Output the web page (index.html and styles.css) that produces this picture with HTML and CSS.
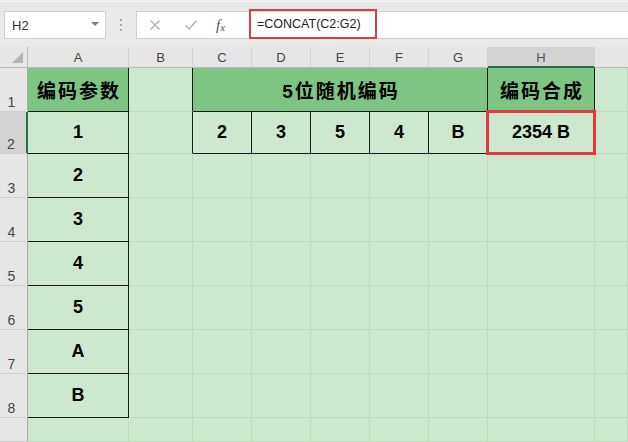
FILE: index.html
```html
<!DOCTYPE html>
<html lang="zh-CN">
<head>
<meta charset="utf-8">
<title>CONCAT</title>
<link rel="stylesheet" href="styles.css">
</head>
<body>
<div class="toolbar">
  <div class="namebox"><span class="ref">H2</span><span class="caret"></span></div>
  <div class="dots"><i></i><i></i><i></i></div>
  <div class="fbar">
    <div class="icons">
      <svg class="ic" width="12" height="12" viewBox="0 0 12 12"><path d="M1.5 1.5 L10.5 10.5 M10.5 1.5 L1.5 10.5" stroke="#b3b3b3" stroke-width="1.4" fill="none"/></svg>
      <svg class="ic" width="14" height="12" viewBox="0 0 14 12"><path d="M1.5 6.5 L5 10 L12.5 1.5" stroke="#b3b3b3" stroke-width="1.5" fill="none"/></svg>
      <span class="fx">f<sub>x</sub></span>
    </div>
    <div class="formula">=CONCAT(C2:G2)</div>
  </div>
</div>
<div class="sheet">
  <div class="corner"><svg width="12" height="12" viewBox="0 0 12 12"><path d="M0 11 L11 0 L11 11 Z" fill="#b5b5b5"/></svg></div>
  <div class="ch">A</div><div class="ch">B</div><div class="ch">C</div><div class="ch">D</div><div class="ch">E</div><div class="ch">F</div><div class="ch">G</div><div class="ch sel">H</div><div class="ch last"></div>

  <div class="rh">1</div>
  <div class="c hd kr kb cjk">编码参数</div>
  <div class="c kr"></div>
  <div class="c hd kr kb cjk span5">5位随机编码</div>
  <div class="c hd kr kb cjk">编码合成</div>
  <div class="c"></div>

  <div class="rh sel">2</div>
  <div class="c kr kb">1</div>
  <div class="c kr"></div>
  <div class="c kr kb">2</div>
  <div class="c kr kb">3</div>
  <div class="c kr kb">5</div>
  <div class="c kr kb">4</div>
  <div class="c kr kb">B</div>
  <div class="c kr kb active">2354<span class="gapb">B</span></div>
  <div class="c"></div>

  <div class="rh">3</div><div class="c kr kb">2</div><div class="c"></div><div class="c"></div><div class="c"></div><div class="c"></div><div class="c"></div><div class="c"></div><div class="c"></div><div class="c"></div>
  <div class="rh">4</div><div class="c kr kb">3</div><div class="c"></div><div class="c"></div><div class="c"></div><div class="c"></div><div class="c"></div><div class="c"></div><div class="c"></div><div class="c"></div>
  <div class="rh">5</div><div class="c kr kb">4</div><div class="c"></div><div class="c"></div><div class="c"></div><div class="c"></div><div class="c"></div><div class="c"></div><div class="c"></div><div class="c"></div>
  <div class="rh">6</div><div class="c kr kb">5</div><div class="c"></div><div class="c"></div><div class="c"></div><div class="c"></div><div class="c"></div><div class="c"></div><div class="c"></div><div class="c"></div>
  <div class="rh">7</div><div class="c kr kb">A</div><div class="c"></div><div class="c"></div><div class="c"></div><div class="c"></div><div class="c"></div><div class="c"></div><div class="c"></div><div class="c"></div>
  <div class="rh">8</div><div class="c kr kb">B</div><div class="c"></div><div class="c"></div><div class="c"></div><div class="c"></div><div class="c"></div><div class="c"></div><div class="c"></div><div class="c"></div>
  <div class="rh"></div><div class="c"></div><div class="c"></div><div class="c"></div><div class="c"></div><div class="c"></div><div class="c"></div><div class="c"></div><div class="c"></div><div class="c"></div>
</div>
</body>
</html>
```
FILE: styles.css
```css
* { box-sizing: border-box; }
html, body { margin: 0; padding: 0; }
body {
  width: 628px;
  height: 442px;
  overflow: hidden;
  background: #e8e8e8;
  font-family: "Liberation Sans", "Noto Sans CJK SC", sans-serif;
}

.toolbar {
  height: 47px;
  display: flex;
  align-items: flex-start;
  padding-top: 11px;
  background: #e9e9e9;
  border-top: 2px solid #f2f2f2;
}
.namebox {
  margin-left: 4px;
  margin-top: -2px;
  width: 102px;
  height: 28px;
  background: #fff;
  border: 1px solid #cfcfcf;
  display: flex;
  align-items: center;
  justify-content: space-between;
  padding: 0 6px 0 7px;
  font-size: 13px;
  color: #333;
}
.caret {
  width: 0; height: 0;
  border-left: 4px solid transparent;
  border-right: 4px solid transparent;
  border-top: 4px solid #7a7a7a;
  margin-top: -2px;
}
.dots {
  width: 30px;
  height: 28px;
  margin-top: -2px;
  display: flex;
  flex-direction: column;
  align-items: center;
  justify-content: center;
  gap: 3px;
}
.dots i {
  display: block;
  width: 2px; height: 2px;
  background: #a6a6a6;
}
.fbar {
  flex: 1;
  height: 28px;
  margin-top: -2px;
  background: #fff;
  border: 1px solid #d0d0d0;
  border-right: none;
  display: flex;
  align-items: center;
}
.icons {
  width: 111px;
  height: 100%;
  display: flex;
  align-items: center;
  padding-left: 12px;
  gap: 0;
}
.icons .ic:first-child { margin-right: 23px; }
.icons .ic:nth-child(2) { margin-right: 18px; }
.fx {
  font-family: "Liberation Serif", serif;
  font-style: italic;
  font-size: 15px;
  color: #555;
  line-height: 1;
}
.fx sub { font-size: 11px; vertical-align: -1px; }
.formula {
  width: 128px;
  height: 30px;
  margin-top: -2px;
  margin-left: 1px;
  border: 2px solid #e23b3f;
  padding-left: 6px;
  display: flex;
  align-items: center;
  font-size: 12.5px;
  color: #222;
}

.sheet {
  display: grid;
  grid-template-columns: 28px 101px 64px 59px 59px 59px 59px 59px 107px 1fr;
  grid-template-rows: 21px 44px 42px 44px 44px 44px 44px 44px 44px 1fr;
  height: 395px;
  background: #cde8cf;
}
.corner {
  background: #e6e6e6;
  border-right: 1px solid #b9b9b9;
  border-bottom: 1px solid #b9b9b9;
  display: flex;
  align-items: flex-end;
  justify-content: flex-end;
  padding: 0 3px 3px 0;
}
.ch {
  background: #e6e6e6;
  border-right: 1px solid #d2d2d2;
  border-bottom: 1px solid #b9b9b9;
  display: flex;
  align-items: center;
  justify-content: center;
  font-size: 13px;
  color: #454545;
  padding-top: 1px;
}
.ch.sel {
  background: #d3d3d3;
  border-bottom: 2px solid #217346;
  color: #555;
}
.ch.last { border-right: none; }
.rh {
  background: #e6e6e6;
  border-right: 1px solid #a9a9a9;
  border-bottom: 1px solid #cfcfcf;
  display: flex;
  align-items: flex-end;
  justify-content: center;
  font-size: 14px;
  color: #454545;
  padding-bottom: 1px;
  padding-right: 4px;
}
.rh.sel {
  background: #d3d3d3;
  border-right: 2px solid #217346;
}
.c {
  background: #cde8cf;
  border-right: 1px solid #bcdabe;
  border-bottom: 1px solid #bcdabe;
  display: flex;
  align-items: center;
  justify-content: center;
  font-weight: 700;
  font-size: 18px;
  color: #000;
}
.c.hd { background: #7ec584; }
.c.kr { border-right-color: #1a1a1a; }
.c.kb { border-bottom-color: #1a1a1a; }
.c.cjk {
  font-size: 19px;
  letter-spacing: 2px;
  padding-left: 2px;
}
.span5 { grid-column: span 5; }
.gapb { margin-left: 5px; }
.active { position: relative; }
.active::after {
  content: "";
  position: absolute;
  top: -2px; left: -2px; right: -2px; bottom: -2px;
  border: 3px solid #e23b3f;
}
```
